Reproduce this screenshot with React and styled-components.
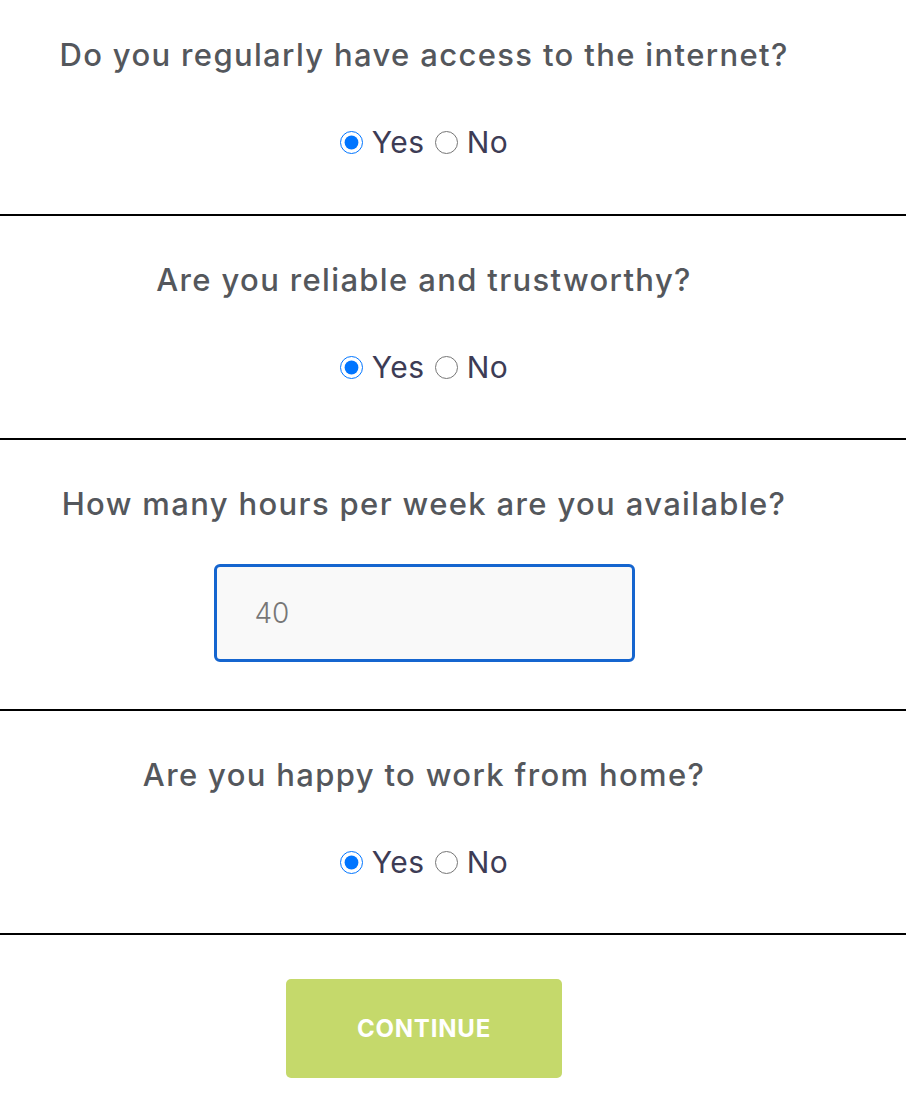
import React, { useState } from "react";
import styled, { createGlobalStyle } from "styled-components";

const GlobalStyle = createGlobalStyle`
  body {
    margin: 0;
    background: #fff;
    font-family: Inter, "Liberation Sans", sans-serif;
  }
`;

const Form = styled.form`
  width: 906px;
  display: flex;
  flex-direction: column;
`;

const Section = styled.div`
  display: flex;
  flex-direction: column;
  align-items: center;
  padding: ${(props) => (props.first ? "26px" : "35px")} 58px 0 0;
  height: ${(props) => props.height}px;
  box-sizing: border-box;
  border-bottom: 2px solid #000;
`;

const Question = styled.h3`
  margin: 0;
  font-size: 31px;
  font-weight: 500;
  color: #54575c;
  line-height: 58px;
  letter-spacing: 1.35px;
  text-align: center;
  white-space: nowrap;
`;

const Options = styled.div`
  display: flex;
  align-items: center;
  margin-top: 44px;
  height: 28px;
`;

const Option = styled.label`
  display: flex;
  align-items: center;
  margin-right: ${(props) => (props.last ? "0" : "10px")};
  font-size: 30px;
  color: #3d3c55;
  letter-spacing: 0.5px;
  cursor: pointer;
`;

const Radio = styled.input`
  width: 23px;
  height: 23px;
  margin: 0 9px 0 0;
`;

const HoursInput = styled.input`
  margin-top: 31px;
  width: 421px;
  height: 98px;
  box-sizing: border-box;
  border: 3px solid #1565cf;
  border-radius: 6px;
  background: #f9f9f9;
  padding: 0 38px;
  font-family: inherit;
  font-size: 28px;
  font-weight: 300;
  color: #777;
  outline: none;
  caret-color: #333;
`;

const Footer = styled.div`
  display: flex;
  justify-content: center;
  padding: 44px 58px 0 0;
`;

const ContinueButton = styled.button`
  width: 276px;
  height: 99px;
  border: none;
  border-radius: 5px;
  background: #c5d96b;
  color: #fff;
  font-family: inherit;
  font-size: 24px;
  font-weight: 700;
  letter-spacing: 0.8px;
  text-transform: uppercase;
  cursor: pointer;
`;

function YesNo({ name }) {
  const [value, setValue] = useState("yes");
  return (
    <Options>
      <Option>
        <Radio
          type="radio"
          name={name}
          checked={value === "yes"}
          onChange={() => setValue("yes")}
        />
        Yes
      </Option>
      <Option last>
        <Radio
          type="radio"
          name={name}
          checked={value === "no"}
          onChange={() => setValue("no")}
        />
        No
      </Option>
    </Options>
  );
}

export default function App() {
  const [hours, setHours] = useState("40");

  return (
    <>
      <GlobalStyle />
      <Form onSubmit={(e) => e.preventDefault()}>
        <Section first height={216}>
          <Question>Do you regularly have access to the internet?</Question>
          <YesNo name="internet" />
        </Section>
        <Section height={224}>
          <Question>Are you reliable and trustworthy?</Question>
          <YesNo name="reliable" />
        </Section>
        <Section height={271}>
          <Question>How many hours per week are you available?</Question>
          <HoursInput
            type="text"
            autoFocus
            value={hours}
            onChange={(e) => setHours(e.target.value)}
          />
        </Section>
        <Section height={224}>
          <Question>Are you happy to work from home?</Question>
          <YesNo name="home" />
        </Section>
        <Footer>
          <ContinueButton type="submit">Continue</ContinueButton>
        </Footer>
      </Form>
    </>
  );
}
